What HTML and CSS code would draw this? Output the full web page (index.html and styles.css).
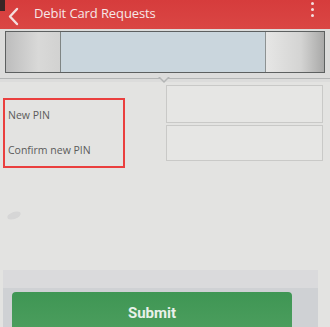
FILE: index.html
```html
<!DOCTYPE html>
<html lang="en">
<head>
    <meta charset="UTF-8">
    <meta name="viewport" content="width=device-width, initial-scale=1.0">
    <title>Debit Card Requests</title>
    <link rel="stylesheet" href="styles.css">
</head>
<body>
    <div class="screen">
        <header class="topbar">
            <svg class="back" width="14" height="20" viewBox="0 0 14 20">
                <path d="M11 3 L4 10.5 L11 18" fill="none" stroke="#f4dede" stroke-width="2.4" stroke-linecap="round" stroke-linejoin="round"/>
            </svg>
            <span class="title">Debit Card Requests</span>
            <span class="menu">
                <i></i><i></i><i></i>
            </span>
        </header>

        <div class="tabband">
            <div class="tabs">
                <div class="tab tab-left"></div>
                <div class="tab tab-mid"></div>
                <div class="tab tab-right"></div>
            </div>
            <div class="tabline"><span class="notch"></span></div>
        </div>

        <div class="form">
            <div class="labels">
                <div class="label">New PIN</div>
                <div class="label">Confirm new PIN</div>
            </div>
            <div class="inputs">
                <div class="input"></div>
                <div class="input input-second"></div>
            </div>
        </div>

        <div class="spacer"><span class="smudge"></span></div>

        <div class="footer">
            <div class="footer-top"></div>
            <div class="footer-bar">
                <button class="submit">Submit</button>
            </div>
        </div>
    </div>
</body>
</html>
```

FILE: styles.css
```css
body {
    margin: 0;
    font-family: "Open Sans", "Liberation Sans", sans-serif;
    background: #e3e3e1;
}
.screen {
    width: 330px;
    height: 327px;
    overflow: hidden;
    display: flex;
    flex-direction: column;
    background: #e3e3e1;
}
.topbar {
    height: 29px;
    flex: none;
    display: flex;
    align-items: center;
    background: linear-gradient(180deg, #d63c3c, #da4644);
    color: #f6e8e8;
    position: relative;
}
.topbar::before {
    content: "";
    position: absolute;
    left: 0;
    top: 0;
    width: 5px;
    height: 11px;
    background: #3a2626;
}
.back {
    margin-left: 6px;
    margin-top: 2px;
    width: 14px;
    height: 20px;
}
.title {
    margin-left: 14px;
    margin-top: -3px;
    font-size: 13px;
    letter-spacing: -0.1px;
}
.menu {
    margin-left: auto;
    margin-right: 16px;
    margin-top: -10px;
    display: flex;
    flex-direction: column;
    gap: 3px;
}
.menu i {
    width: 3px;
    height: 3px;
    border-radius: 50%;
    background: #f3dede;
}
.tabband {
    flex: none;
    height: 53px;
    background: #dcdcdb;
    display: flex;
    flex-direction: column;
    padding-top: 2px;
    box-sizing: border-box;
}
.tabs {
    margin: 0 5px 0 5px;
    height: 40px;
    border: 1px solid #5d6060;
    display: flex;
    background: #c9c9c9;
}
.tab-left {
    width: 54px;
    background: linear-gradient(90deg, #bdbdbd, #d9d9d8 60%, #d2d2d1);
    border-right: 1px solid #7f8584;
}
.tab-mid {
    flex: 1;
    background: #cad6dd;
}
.tab-right {
    width: 58px;
    background: linear-gradient(90deg, #e6e6e5, #d4d4d3 60%, #a9a9a8);
    border-left: 1px solid #8d9292;
}
.tabline {
    margin-top: 5px;
    height: 1px;
    background: #b3b5b5;
    position: relative;
}
.notch {
    position: absolute;
    left: 158px;
    top: -1px;
    width: 0;
    height: 0;
    border-left: 6px solid transparent;
    border-right: 6px solid transparent;
    border-top: 6px solid #b3b5b5;
}
.notch::after {
    content: "";
    position: absolute;
    left: -5px;
    top: -7px;
    border-left: 5px solid transparent;
    border-right: 5px solid transparent;
    border-top: 5px solid #dcdcdb;
}
.form {
    display: flex;
    padding-top: 3px;
}
.labels {
    margin-left: 3px;
    margin-top: 13px;
    width: 115px;
    height: 49px;
    border: 2px solid #ea3f3e;
    display: flex;
    flex-direction: column;
    justify-content: space-between;
    padding: 8px 0 9px 3px;
}
.label {
    font-size: 10.5px;
    line-height: 14px;
    color: #5b5b5b;
}
.inputs {
    margin-left: 41px;
    display: flex;
    flex-direction: column;
    gap: 2px;
}
.input {
    width: 155px;
    height: 36px;
    border: 1px solid #c9c9c7;
    background: #e6e6e4;
}
.input-second {
    height: 34px;
}
.spacer {
    flex: 1;
    position: relative;
}
.smudge {
    position: absolute;
    left: 7px;
    top: 44px;
    width: 14px;
    height: 7px;
    border-radius: 50%;
    background: #d6d6d6;
    transform: rotate(-20deg);
}
.footer {
    flex: none;
    margin: 0 12px 0 3px;
}
.footer-top {
    height: 18px;
    background: #dadadc;
}
.footer-bar {
    height: 39px;
    background: #cfd1d4;
    padding: 4px 26px 0 9px;
    box-sizing: border-box;
}
.submit {
    width: 100%;
    height: 40px;
    border: none;
    border-radius: 4px;
    background: linear-gradient(180deg, #3f9654, #4c9e5e);
    color: #e9f1ea;
    font-family: Roboto, "Liberation Sans", sans-serif;
    font-size: 15px;
    font-weight: bold;
    padding: 2px 0 0 0;
}
```
